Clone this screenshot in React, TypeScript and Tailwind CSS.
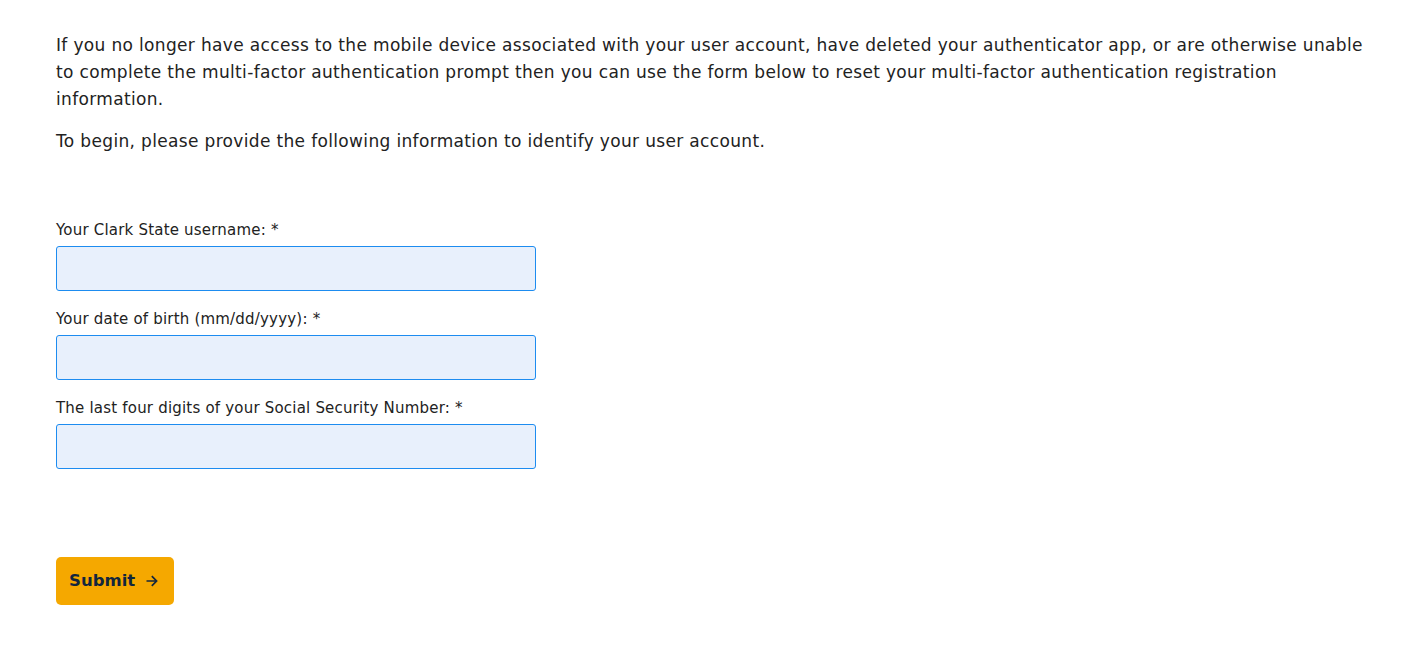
import React from "react";

function Field({ label }: { label: string }) {
  return (
    <div className="flex flex-col">
      <label className="pt-[1px] text-[15px] leading-[20px] tracking-[0.2px] text-[#222222]">{label}</label>
      <input
        className="mt-[6px] h-[45px] w-[480px] rounded-[3px] border border-[#1d8cf0] bg-[#e8f0fc] outline-none"
        type="text"
      />
    </div>
  );
}

export default function App() {
  return (
    <div className="min-h-[647px] bg-white font-['DejaVu_Sans',sans-serif] text-[#222222]">
      <div className="pl-[56px] pr-[20px] pt-[32px]">
        <p className="w-[1320px] text-[17px] leading-[27px] tracking-[0.34px]">
          If you no longer have access to the mobile device associated with your user account, have deleted your authenticator app, or are otherwise unable to complete the multi-factor authentication prompt then you can use the form below to reset your multi-factor authentication registration information.
        </p>
        <p className="mt-[15px] text-[17px] leading-[27px] tracking-[0.34px]">
          To begin, please provide the following information to identify your user account.
        </p>
        <div className="mt-[64px] flex flex-col gap-[17px]">
          <Field label="Your Clark State username: *" />
          <Field label="Your date of birth (mm/dd/yyyy): *" />
          <Field label="The last four digits of your Social Security Number: *" />
        </div>
        <button className="mt-[88px] flex h-[48px] w-[118px] items-center rounded-[5px] bg-[#f5a800] pl-[13px] text-[16.5px] font-bold text-[#13263d]">
          Submit
          <svg className="ml-[11px]" width="12" height="12" viewBox="0 0 12 12" fill="none" stroke="#13263d" strokeWidth="1.7">
            <path d="M0.5 6h10.2M5.8 1.2L10.6 6 5.8 10.8" />
          </svg>
        </button>
      </div>
    </div>
  );
}
